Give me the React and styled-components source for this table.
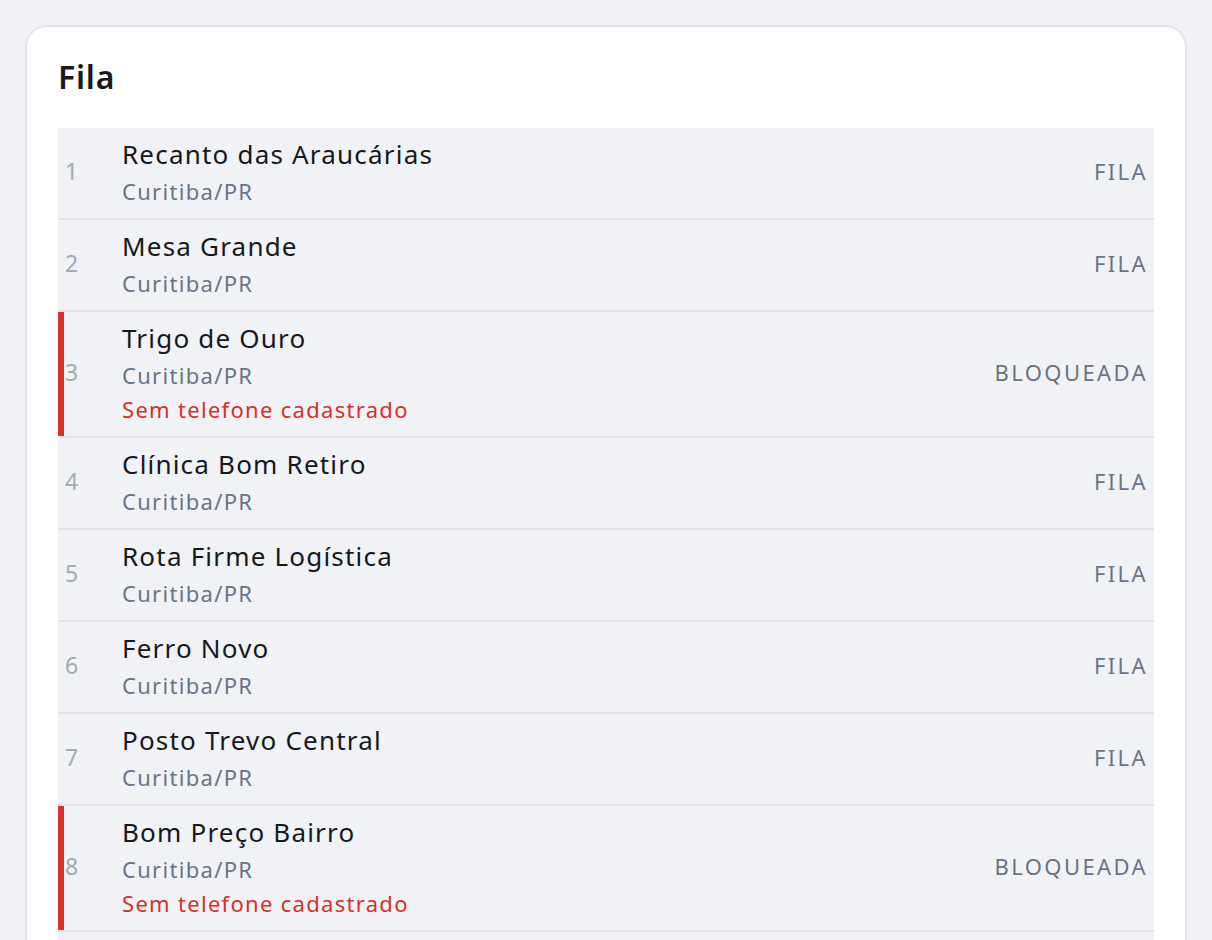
import styled, { createGlobalStyle } from "styled-components"

const Global = createGlobalStyle`
  body {
    margin: 0;
    background: #f0f2f5;
    font-family: "Noto Sans", "DejaVu Sans", sans-serif;
  }
`

const Pagina = styled.div`
  padding: 25px 25px 0 25px;
  min-height: 100vh;
  box-sizing: border-box;
`

const Cartao = styled.section`
  background: #ffffff;
  border: 2px solid #e3e5e9;
  border-bottom: none;
  border-radius: 22px 22px 0 0;
  padding: 28px 31px 0 31px;
`

const Titulo = styled.h1`
  margin: 0 0 29px 0;
  font-size: 32px;
  line-height: 44px;
  font-weight: 600;
  letter-spacing: 0.8px;
  color: #16181c;
`

const Lista = styled.ol`
  list-style: none;
  margin: 0;
  padding: 0;
`

const Linha = styled.li`
  display: grid;
  grid-template-columns: 57px 1fr auto;
  align-items: center;
  padding: 6px 6px 10px 7px;
  background: #f0f2f5;
  border-bottom: 2px solid #e2e4e8;
  box-shadow: ${(p) => (p.$bloqueada ? "inset 6px 0 0 #d8302a" : "none")};
`

const Numero = styled.span`
  font-size: 23px;
  color: #a3aab6;
`

const Info = styled.div`
  display: flex;
  flex-direction: column;
`

const Nome = styled.span`
  font-size: 26px;
  line-height: 40px;
  letter-spacing: 1.2px;
  color: #16181c;
`

const Cidade = styled.span`
  font-size: 22px;
  line-height: 34px;
  letter-spacing: 1.3px;
  color: #6b7484;
`

const Aviso = styled(Cidade)`
  color: #d8302a;
`

const Status = styled.span`
  font-size: 22px;
  letter-spacing: 2.4px;
  color: #6b7484;
`

const empresas = [
  { nome: "Recanto das Araucárias", status: "FILA" },
  { nome: "Mesa Grande", status: "FILA" },
  { nome: "Trigo de Ouro", status: "BLOQUEADA", aviso: "Sem telefone cadastrado" },
  { nome: "Clínica Bom Retiro", status: "FILA" },
  { nome: "Rota Firme Logística", status: "FILA" },
  { nome: "Ferro Novo", status: "FILA" },
  { nome: "Posto Trevo Central", status: "FILA" },
  { nome: "Bom Preço Bairro", status: "BLOQUEADA", aviso: "Sem telefone cadastrado" },
  { nome: "Casa Verde", status: "FILA" },
]

export default function App() {
  return (
    <>
      <Global />
      <Pagina>
        <Cartao>
          <Titulo>Fila</Titulo>
          <Lista>
            {empresas.map((e, i) => (
              <Linha key={i} $bloqueada={!!e.aviso}>
                <Numero>{i + 1}</Numero>
                <Info>
                  <Nome>{e.nome}</Nome>
                  <Cidade>Curitiba/PR</Cidade>
                  {e.aviso && <Aviso>{e.aviso}</Aviso>}
                </Info>
                <Status>{e.status}</Status>
              </Linha>
            ))}
          </Lista>
        </Cartao>
      </Pagina>
    </>
  )
}
